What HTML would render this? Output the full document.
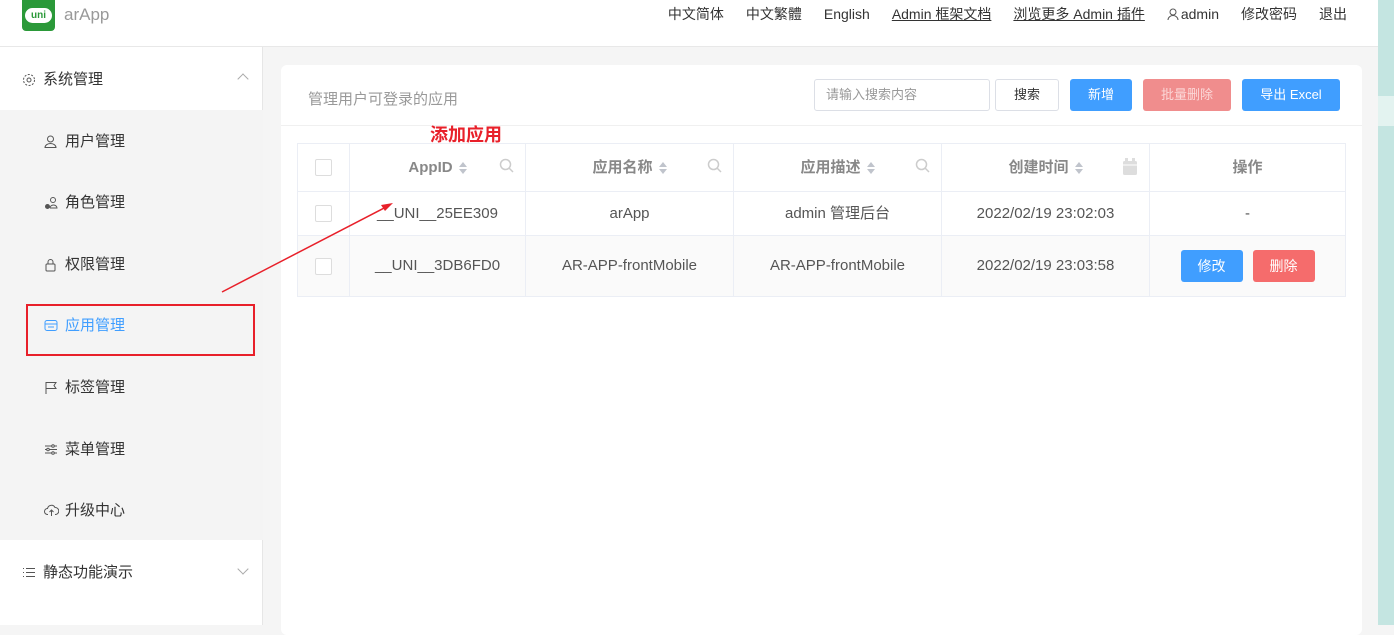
<!DOCTYPE html>
<html><head><meta charset="utf-8"><style>
*{margin:0;padding:0;box-sizing:border-box}
body{width:1394px;height:625px;overflow:hidden;position:relative;background:#f5f5f5;font-family:"Liberation Sans","Noto Sans CJK SC",sans-serif;color:#333;font-size:14px}
.abs{position:absolute}
.hdr{left:0;top:0;width:1378px;height:47px;background:#fff;border-bottom:1px solid #e8e8e8}
.side{left:0;top:47px;width:263px;height:578px;background:#fff;border-right:1px solid #e6e6e6}
.sub{left:0;top:110px;width:263px;height:430px;background:#f4f4f4}
.mi{position:absolute;left:44px;font-size:15px;color:#333}
.mi svg{position:absolute;left:0;top:3px}
.mi span{position:absolute;left:21px;top:-2px;white-space:nowrap}
.card{left:281px;top:65px;width:1081px;height:570px;background:#fff;border-radius:6px}
.btn{position:absolute;top:79px;height:32px;border-radius:3px;color:#fff;font-size:13px;text-align:center;line-height:32px}
table{position:absolute;left:297px;top:143px;border-collapse:collapse;font-size:15px}
td,th{border:1px solid #ebeef5;text-align:center;color:#555;font-weight:normal;line-height:20px}
th{font-weight:bold;color:#888;height:48px;position:relative}
.cb{display:inline-block;width:17px;height:17px;border:1px solid #ddd;border-radius:2px;background:#fff;vertical-align:middle}
.srt{display:inline-block;vertical-align:middle;margin-left:6px;width:8px;height:14px;position:relative}
.srt:before{content:"";position:absolute;top:1px;left:0;border:4px solid transparent;border-bottom:5px solid #c0c4cc;border-top:0}
.srt:after{content:"";position:absolute;bottom:1px;left:0;border:4px solid transparent;border-top:5px solid #c0c4cc;border-bottom:0}
.mag{position:absolute;right:10px;top:14px}
.tb{display:inline-block;width:62px;height:32px;line-height:32px;border-radius:3px;color:#fff;font-size:14px;margin:0 5px}
.nav{position:absolute;right:47px;top:4px;display:flex;align-items:baseline;gap:22px;font-size:14px;line-height:20px;color:#333;white-space:nowrap}
</style></head><body>
<div class="abs hdr"></div>
<div class="abs" style="left:22px;top:0;width:33px;height:31px;background:#2b9939;border-radius:0 0 4px 4px"></div>
<div class="abs" style="left:25px;top:8px;width:27px;height:15px;background:#fff;border-radius:8px;color:#2b9939;font-size:10px;font-weight:bold;text-align:center;line-height:15px">uni</div>
<div class="abs" style="left:64px;top:5px;font-size:17px;color:#999">arApp</div>
<div class="nav"><span>中文简体</span><span>中文繁體</span><span>English</span><u>Admin 框架文档</u><u>浏览更多 Admin 插件</u><span><svg width="12" height="12" style="vertical-align:-1px;margin-right:2px"><circle cx="6" cy="4" r="3" fill="none" stroke="#555"/><path d="M1 12a5 4.5 0 0 1 10 0" fill="none" stroke="#555"/></svg>admin</span><span>修改密码</span><span>退出</span></div>
<div class="abs" style="left:1378px;top:0;width:16px;height:625px;background:#c4e5e1"></div>
<div class="abs" style="left:1378px;top:96px;width:16px;height:30px;background:#e3f3f0"></div>

<div class="abs side"></div>
<div class="abs sub"></div>
<div class="mi" style="left:22px;top:70px"><svg width="14" height="14" viewBox="0 0 14 14"><circle cx="7" cy="7" r="2" fill="none" stroke="#555"/><circle cx="7" cy="7" r="5.5" fill="none" stroke="#555" stroke-dasharray="2 1.5"/></svg><span>系统管理</span></div>
<div class="abs" style="left:239px;top:75px;width:8px;height:8px;border-left:1px solid #aaa;border-top:1px solid #aaa;transform:rotate(45deg)"></div>
<div class="mi" style="top:132px"><svg width="13" height="13"><circle cx="6.5" cy="4" r="3" fill="none" stroke="#555"/><path d="M1 12.5a5.5 4 0 0 1 11 0z" fill="none" stroke="#555"/></svg><span>用户管理</span></div>
<div class="mi" style="top:193px"><svg width="14" height="14"><circle cx="9" cy="4" r="2.5" fill="none" stroke="#555"/><circle cx="3.5" cy="10.5" r="2.5" fill="#555"/><path d="M6 12h7a3.5 3 0 0 0-7 0" fill="none" stroke="#555"/></svg><span>角色管理</span></div>
<div class="mi" style="top:255px"><svg width="13" height="14"><rect x="2" y="6" width="9" height="7" rx="1" fill="none" stroke="#555"/><path d="M4 6V4a2.5 2.5 0 0 1 5 0v2" fill="none" stroke="#555"/></svg><span>权限管理</span></div>
<div class="mi" style="top:316px;color:#409eff"><svg width="14" height="13"><rect x="1" y="1.5" width="12" height="10" rx="2" fill="none" stroke="#409eff"/><path d="M1 5h12M4 8h6" stroke="#409eff"/></svg><span>应用管理</span></div>
<div class="mi" style="top:378px"><svg width="13" height="14"><path d="M2 13V1.5h10l-2 3 2 3H2" fill="none" stroke="#555"/></svg><span>标签管理</span></div>
<div class="mi" style="top:440px"><svg width="14" height="13"><path d="M1 3h12M1 6.5h12M1 10h12" stroke="#555"/><circle cx="9" cy="3" r="1.3" fill="#f4f4f4" stroke="#555"/><circle cx="4" cy="6.5" r="1.3" fill="#f4f4f4" stroke="#555"/><circle cx="9" cy="10" r="1.3" fill="#f4f4f4" stroke="#555"/></svg><span>菜单管理</span></div>
<div class="mi" style="top:501px"><svg width="15" height="13"><path d="M4 10.5H3.5a3 3 0 0 1 0-6 4 4 0 0 1 7.5-1 3.2 3.2 0 0 1 0.5 7H11M7.5 12V6M5.5 8l2-2 2 2" fill="none" stroke="#555"/></svg><span>升级中心</span></div>
<div class="mi" style="left:22px;top:563px"><svg width="14" height="13"><path d="M1 2.5h1M1 6.5h1M1 10.5h1M4 2.5h9M4 6.5h9M4 10.5h9" stroke="#555"/></svg><span>静态功能演示</span></div>
<div class="abs" style="left:239px;top:565px;width:8px;height:8px;border-right:1px solid #aaa;border-bottom:1px solid #aaa;transform:rotate(45deg)"></div>

<div class="abs card"></div>
<div class="abs" style="left:281px;top:125px;width:1081px;border-top:1px solid #f0f0f0"></div>
<div class="abs" style="left:308px;top:88px;font-size:15px;color:#999">管理用户可登录的应用</div>
<div class="abs" style="left:814px;top:79px;width:176px;height:32px;border:1px solid #dcdfe6;border-radius:3px;font-size:13px;color:#999;line-height:30px;padding-left:11px">请输入搜索内容</div>
<div class="btn" style="left:995px;width:64px;border:1px solid #dcdfe6;color:#333;line-height:30px;background:#fff">搜索</div>
<div class="btn" style="left:1070px;width:62px;background:#409eff">新增</div>
<div class="btn" style="left:1143px;width:88px;background:#f08d8d;color:#fbd7d7">批量删除</div>
<div class="btn" style="left:1242px;width:98px;background:#409eff">导出 Excel</div>
<div class="abs" style="left:430px;top:121px;font-size:18px;font-weight:bold;color:#e8202a">添加应用</div>

<table>
<tr><th style="width:52px"><span class="cb"></span></th>
<th style="width:176px">AppID<span class="srt"></span><svg class="mag" width="16" height="16"><circle cx="6.5" cy="6.5" r="5" fill="none" stroke="#ccc" stroke-width="1.5"/><path d="M10 10l4 4" stroke="#ccc" stroke-width="1.5"/></svg></th>
<th style="width:208px">应用名称<span class="srt"></span><svg class="mag" width="16" height="16"><circle cx="6.5" cy="6.5" r="5" fill="none" stroke="#ccc" stroke-width="1.5"/><path d="M10 10l4 4" stroke="#ccc" stroke-width="1.5"/></svg></th>
<th style="width:208px">应用描述<span class="srt"></span><svg class="mag" width="16" height="16"><circle cx="6.5" cy="6.5" r="5" fill="none" stroke="#ccc" stroke-width="1.5"/><path d="M10 10l4 4" stroke="#ccc" stroke-width="1.5"/></svg></th>
<th style="width:208px">创建时间<span class="srt"></span><svg class="mag" width="16" height="18" style="right:11px;top:14px"><rect x="1" y="3" width="14" height="14" rx="1.5" fill="#ddd"/><rect x="3" y="0" width="3" height="5" fill="#ddd"/><rect x="10" y="0" width="3" height="5" fill="#ddd"/><path d="M1 7h14" stroke="#fff"/></svg></th>
<th style="width:196px">操作</th></tr>
<tr style="height:44px"><td><span class="cb"></span></td><td>__UNI__25EE309</td><td>arApp</td><td>admin 管理后台</td><td>2022/02/19 23:02:03</td><td>-</td></tr>
<tr style="height:61px;background:#fafafa"><td><span class="cb"></span></td><td>__UNI__3DB6FD0</td><td>AR-APP-frontMobile</td><td>AR-APP-frontMobile</td><td>2022/02/19 23:03:58</td><td><span class="tb" style="background:#409eff">修改</span><span class="tb" style="background:#f56c6c">删除</span></td></tr>
</table>

<div class="abs" style="left:26px;top:304px;width:229px;height:52px;border:2px solid #e8202a"></div>
<svg class="abs" style="left:0;top:0" width="1394" height="625"><path d="M222 292L388 206" stroke="#e8202a" stroke-width="1.5"/><path d="M393 203l-12 2 4 6z" fill="#e8202a"/></svg>
</body></html>
